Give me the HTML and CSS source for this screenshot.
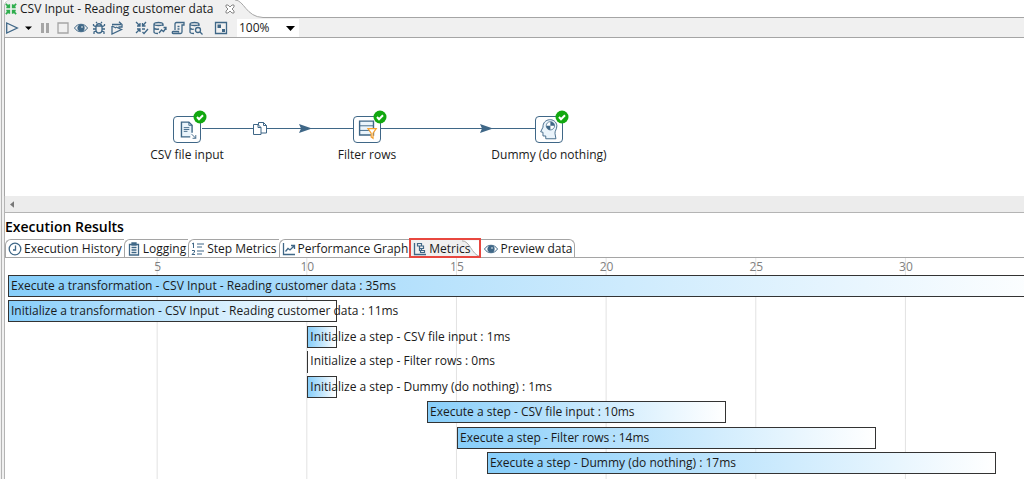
FILE: index.html
```html
<!DOCTYPE html>
<html lang="en">
<head>
    <meta charset="UTF-8">
    <meta name="viewport" content="width=device-width, initial-scale=1.0">
    <title>CSV Input - Reading customer data</title>
    <link rel="stylesheet" href="styles.css">
</head>
<body>
    <div class="window">
        <header class="editor-tabs">
            <div class="editor-tab">
                <svg class="icon" viewBox="0 0 14 14" fill="none" stroke="#2fae4e" stroke-width="2"><path d="M1 1l4 4M5 1.500V5H1.500M13 1L9 5M9 1.500V5h3.500M1 13l4-4M5 12.500V9H1.500M13 13L9 9M9 12.500V9h3.500"/></svg>
                <span>CSV Input - Reading customer data</span>
                <button class="close" aria-label="Close tab"><svg viewBox="0 0 10 10" fill="#fff" stroke="#888"><path d="M1 1h2l2 2 2-2h2v2L7 5l2 2v2H7L5 7 3 9H1V7l2-2-2-2z"/></svg></button>
            </div>
            <svg class="tab-curve" viewBox="0 0 30 18"><path d="M0 0C9 0 11 17 28 17.500H30V18H0z" fill="#f0f0f0"/><path d="M0 0C9 0 11 17 28 17.500H30" fill="none" stroke="#a5a5a5"/></svg>
            <div class="editor-rest"></div>
        </header>

        <div class="toolbar">
            <button aria-label="Run"><svg viewBox="0 0 14 14"><path d="M1.700 2l10.600 5-10.600 5z"/></svg></button>
            <button class="narrow" aria-label="Run options"><svg viewBox="0 0 11 14"><path d="M2 5.500h7L5.500 9z" fill="#000" stroke="none"/></svg></button>
            <button aria-label="Pause"><svg viewBox="0 0 14 14"><path d="M3 2h3v10H3zM8 2h3v10H8z" fill="#a5a5a5" stroke="none"/></svg></button>
            <button aria-label="Stop"><svg viewBox="0 0 14 14"><path d="M2 2h10v10H2z" stroke="#a5a5a5"/></svg></button>
            <button aria-label="Preview"><svg viewBox="0 0 14 14"><path d="M.5 7c3-5 10-5 13 0-3 5-10 5-13 0z" stroke-width="1"/><circle cx="7" cy="7" r="3" fill="#3f6787"/><circle cx="8" cy="6" r=".8" fill="#fff" stroke="none"/></svg></button>
            <button aria-label="Debug"><svg viewBox="0 0 14 14"><path d="M4.500 5c0-3 5-3 5 0M4 5h6v4c0 4-6 4-6 0zM4 6L1.500 4.500V3M10 6l2.500-1.500V3M4 8H1M10 8h3M4 10l-2 1v2M10 10l2 1v2M5 2L4 1M9 2l1-1"/></svg></button>
            <button aria-label="Replay"><svg viewBox="0 0 14 14"><path d="M2 5v8l9.500-4.500L6 6M2 5l4 2M2 3.500h9M9 .8l3 2.700v2.500H8.500"/></svg></button>
            <button class="group" aria-label="Verify"><svg viewBox="0 0 14 14"><path d="M1 1l4 4M5 2v3H2M11 1L7.500 5M7.500 2v3h3M1 12l4-4M5 11V8H2M7 8h3M7.500 11l1.500 1.500L13 8"/></svg></button>
            <button aria-label="Impact"><svg viewBox="0 0 14 14"><path d="M10 5V3C10 1 1 1 1 3v8c0 1 2 1.500 4 1.500M1 3c0 2 9 2 9 0M1 7c1 1.200 3 1.500 5 1M6 12l2.500-3 2 1.500L13 7M10.500 6.500H13V9"/></svg></button>
            <button aria-label="SQL"><svg viewBox="0 0 14 14"><path d="M4 9V3c0-1 .5-1.500 1.500-1.500H13V4h-2v7c0 1-.5 1.500-1.500 1.500H2c-1 0-1-2 0-2h5.500v1M6.500 5.500h2M6.500 8h2"/></svg></button>
            <button aria-label="Explore database"><svg viewBox="0 0 14 14"><path d="M10 5V3C10 1 1 1 1 3v8c0 1 2 1.500 4 1.500M1 3c0 2 9 2 9 0M1 7c1 1.200 3 1.500 4 1M11 11l2.500 2.500"/><circle cx="9" cy="9" r="2.500"/></svg></button>
            <button class="group" aria-label="Show results"><svg viewBox="0 0 14 14"><path d="M1.500 1.500h11v11h-11z"/><path d="M3.500 3.500h3.500v3.500H3.500zM8 8h3v3H8z" fill="#3f6787" stroke="none"/></svg></button>
            <div class="zoom">
                <select aria-label="Zoom"><option>100%</option></select>
                <svg viewBox="0 0 9 5"><path d="M0 0h9L4.500 5z" fill="#000"/></svg>
            </div>
        </div>

        <main class="canvas">
            <svg class="hops" width="600" height="158" viewBox="0 0 600 158">
                <path d="M197 90.500H349M376 90.500H532" stroke="#3f6787" fill="none"/>
                <path d="M294 86l13 4.500-13 4.500 2-4.500zM475 86l13 4.500-13 4.500 2-4.500z" fill="#3f6787"/>
                <g fill="#fff" stroke="#3f6787"><path d="M253.500 84.500h5l3 3v7.500h-8z"/><path d="M248.500 86.500h4.500l3 3v7h-7.500z"/><path d="M258.500 84.500v3h3M253 86.500v3h3" fill="none"/></g>
            </svg>
            <div class="node node-input">
                <div class="node-box">
                    <svg viewBox="0 0 27 27" fill="none" stroke="#3f6787"><path d="M17 21.500H7.500v-16h8l3.500 3.500v8" fill="#eaf4fb" stroke-width="1.500"/><path d="M15.500 5.500V9H19M10 11.500h6M10 13.500h6M10 15.500h4M18.500 18.500l4.500 4.500M23 19.500V23h-3.500"/></svg>
                    <svg class="check" viewBox="0 0 14 14"><circle cx="7" cy="7" r="6.500" fill="#12a80f"/><path d="M4 7l2 2.200 4-4" fill="none" stroke="#fff" stroke-width="2"/></svg>
                </div>
                <span>CSV file input</span>
            </div>
            <div class="node node-filter">
                <div class="node-box">
                    <svg viewBox="0 0 27 27" fill="none" stroke="#3f6787"><path d="M5.500 4.500h15v15h-15z" fill="#eaf4fb" stroke-width="1.500"/><path d="M5.500 9.500h15M5.500 14.500h15"/><path d="M14.500 12.500h9l-3.500 5v5.500l-2-1.500v-4z" fill="#fff" stroke="#f5a030" stroke-width="1.300"/></svg>
                    <svg class="check" viewBox="0 0 14 14"><circle cx="7" cy="7" r="6.500" fill="#12a80f"/><path d="M4 7l2 2.200 4-4" fill="none" stroke="#fff" stroke-width="2"/></svg>
                </div>
                <span>Filter rows</span>
            </div>
            <div class="node node-dummy">
                <div class="node-box">
                    <svg viewBox="0 0 27 27" fill="none" stroke="#3f6787"><path d="M10 23.500v-3H7V16.500L4.500 16l2.500-5C6.500 1 21 0 22 9.500c0 4-2.500 5.500-2 8.500l1 5.500z" fill="#eaf4fb"/><circle cx="15" cy="9.500" r="4.500" fill="#fff" stroke-width=".8"/><path d="M15 9.500V5a4.500 4.500 0 0 1 4.500 4.500zM15 9.500V14A4.500 4.500 0 0 1 10.500 9.500z" fill="#3f6787" stroke="none"/></svg>
                    <svg class="check" viewBox="0 0 14 14"><circle cx="7" cy="7" r="6.500" fill="#12a80f"/><path d="M4 7l2 2.200 4-4" fill="none" stroke="#fff" stroke-width="2"/></svg>
                </div>
                <span>Dummy (do nothing)</span>
            </div>
        </main>
        <div class="scrollbar"><button aria-label="Scroll left"><svg viewBox="0 0 5 8"><path d="M5 0v8L0 4z" fill="#777"/></svg></button></div>

        <section class="results">
            <h2>Execution Results</h2>
            <nav class="result-tabs">
                <button class="tab"><svg class="icon" viewBox="0 0 14 14"><circle cx="7" cy="7" r="5.800"/><path d="M7.500 3.500V8H5"/></svg>Execution History</button>
                <button class="tab"><svg class="icon" viewBox="0 0 14 14"><path d="M2.500 2.500h9v10.500h-9zM5 1h4v2H5zM4.500 5.500h5M4.500 8h5M4.500 10.500h5"/></svg>Logging</button>
                <button class="tab"><svg class="icon" viewBox="0 0 14 14"><path d="M6 2h7M6 5h5M6 9h7M6 12h5M1 2l1.500-1v5M1 8.500h2.500v1.500L1 12.500h3" stroke-width="1"/></svg>Step Metrics</button>
                <button class="tab"><svg class="icon" viewBox="0 0 14 14"><path d="M1.500 1v11.500H13M3.500 9.500L6 6.500l2 1.500 4-4M9 3.500h3.500V7"/></svg>Performance Graph</button>
                <button class="tab active"><svg class="icon" viewBox="0 0 14 14"><path d="M1.500 1v11.500H13"/><path d="M4.500 1.500h4v2.500h-4zM6.500 4h4v2.500h-4zM6.500 6.500h2v2h-2zM7.500 8.500h4V10.500h-4z" stroke-width="1.200"/></svg>Metrics
                    <svg class="active-curve" viewBox="0 0 20 18"><path d="M0 0C9 0 10 15 20 18V0z" fill="#fff"/><path d="M0 .5C9 .5 10 15 20 18" fill="none" stroke="#a5a5a5"/></svg></button>
                <button class="tab last"><svg class="icon" viewBox="0 0 14 14"><path d="M.5 7c3-5 10-5 13 0-3 5-10 5-13 0z" stroke-width="1"/><circle cx="7" cy="7" r="3" fill="#3f6787"/><circle cx="8" cy="6" r=".8" fill="#fff" stroke="none"/></svg>Preview data</button>
            </nav>
            <div class="chart">
                <ol class="axis">
                    <li>5</li><li>10</li><li>15</li><li>20</li><li>25</li><li>30</li>
                </ol>
                <div class="bars">
                    <div class="bar" style="--start:0; --ms:35">Execute a transformation - CSV Input - Reading customer data : 35ms</div>
                    <div class="bar" style="--start:0; --ms:11">Initialize a transformation - CSV Input - Reading customer data : 11ms</div>
                    <div class="bar" style="--start:10; --ms:1">Initialize a step - CSV file input : 1ms</div>
                    <div class="bar empty" style="--start:10; --ms:0">Initialize a step - Filter rows : 0ms</div>
                    <div class="bar" style="--start:10; --ms:1">Initialize a step - Dummy (do nothing) : 1ms</div>
                    <div class="bar" style="--start:14; --ms:10">Execute a step - CSV file input : 10ms</div>
                    <div class="bar" style="--start:15; --ms:14">Execute a step - Filter rows : 14ms</div>
                    <div class="bar" style="--start:16; --ms:17">Execute a step - Dummy (do nothing) : 17ms</div>
                </div>
            </div>
        </section>
    </div>
</body>
</html>
```
FILE: styles.css
```css
* { box-sizing: border-box; }
body { margin: 0; background: #f0f0f0; color: #1a1a1a; font: 12px/16px "Segoe UI", "Open Sans", sans-serif; }
button { display: flex; align-items: center; padding: 0; border: 0; background: none; color: inherit; font: inherit; }
svg { display: block; flex: none; }

.window { display: flex; flex-direction: column; min-height: 100vh; margin-left: 1px; padding-left: 2px; border-left: 1px solid #b4b4b4; overflow: hidden; }

.editor-tabs { display: flex; height: 18px; background: #fff; }
.editor-tab { display: flex; align-items: center; gap: 3px; border-left: 1px solid #b4b4b4; border-radius: 6px 0 0 0; background: #f0f0f0; }
.editor-tab .icon { width: 12px; height: 12px; }
.close { margin-left: 8px; }
.close svg { width: 10px; height: 10px; }
.tab-curve { width: 30px; height: 18px; }
.editor-rest { flex: 1; border-bottom: 1px solid #a5a5a5; }

.toolbar { display: flex; align-items: center; gap: 4px; height: 19px; border-left: 1px solid #b4b4b4; }
.toolbar button svg { width: 14px; height: 14px; fill: none; stroke: #3f6787; stroke-width: 1.3; }
.toolbar .narrow svg { width: 11px; }
.toolbar .group { margin-left: 7px; }
.zoom { position: relative; margin-left: 5px; }
.zoom select { display: block; width: 62px; height: 18px; padding: 0 2px; border: 0; background: #fff; color: inherit; font: inherit; appearance: none; }
.zoom svg { position: absolute; top: 7px; right: 4px; width: 9px; height: 5px; pointer-events: none; }

.canvas { position: relative; height: 159px; border: solid #a5a5a5; border-width: 1px 0 0 1px; background: #fff; }
.hops { position: absolute; top: 0; left: 0; }
.node { position: absolute; top: 78px; display: flex; flex-direction: column; align-items: center; gap: 4px; width: 140px; }
.node-input { left: 112px; }
.node-filter { left: 292px; }
.node-dummy { left: 474px; }
.node-box { position: relative; width: 28px; height: 27px; border: 1px solid #3f6787; border-radius: 4px; background: #fff; }
.node-box svg { width: 26px; height: 25px; }
.node-box .check { position: absolute; top: -7px; right: -7px; width: 14px; height: 14px; }

.scrollbar { display: flex; align-items: center; height: 17px; padding-left: 5px; border: solid #b4b4b4; border-width: 0 0 1px 1px; background: #ececec; }
.scrollbar svg { width: 4px; height: 7px; }

.results { display: flex; flex: 1; flex-direction: column; border-left: 1px solid #b4b4b4; background: #fff; }
.results h2 { margin: 0; padding: 3px 0 2px; color: #000; font-size: 14px; line-height: 21px; font-weight: 600; }
.result-tabs { display: flex; height: 19px; border-bottom: 1px solid #a5a5a5; }
.tab { gap: 2px; padding: 0 2px; border: solid #a5a5a5; border-width: 1px 0 0 1px; border-radius: 6px 0 0 0; }
.tab .icon { width: 14px; height: 14px; fill: none; stroke: #3f6787; stroke-width: 1.3; }
.tab.active { position: relative; padding-right: 10px; border-radius: 0; background: #f0f0f0; outline: 2px solid #e8473f; outline-offset: -1px; z-index: 1; }
.active-curve { position: absolute; top: 0; right: 0; width: 18px; height: 17px; z-index: -1; }
.tab.last { padding-left: 4px; border-width: 1px 1px 0 0; border-radius: 0 6px 0 0; }

/* one millisecond on the time axis */
.chart { --unit: 2.946%; display: flex; flex: 1; flex-direction: column; margin-left: 3px; background: linear-gradient(90deg, transparent calc(100% - 1px), #e2e2e2 0) 0 0 / calc(5 * var(--unit)) 100%; }
.axis { display: grid; grid-template-columns: calc(2.5 * var(--unit)) repeat(6, calc(5 * var(--unit))); margin: 0; padding: 1px 0 0; list-style: none; color: #808080; }
.axis li { text-align: center; }
.axis li:first-child { grid-column-start: 2; }
.bars { display: flex; flex: 1; flex-direction: column; justify-content: space-between; padding-bottom: 5px; }
.bar { width: calc(var(--ms) * var(--unit)); height: 22px; margin-left: calc(var(--start) * var(--unit)); padding-left: 2px; border: 1px solid #333; background: linear-gradient(90deg, #87cefa, #fff); line-height: 20px; white-space: nowrap; }
.bar.empty { border-width: 0 0 0 1px; background: none; }
```
